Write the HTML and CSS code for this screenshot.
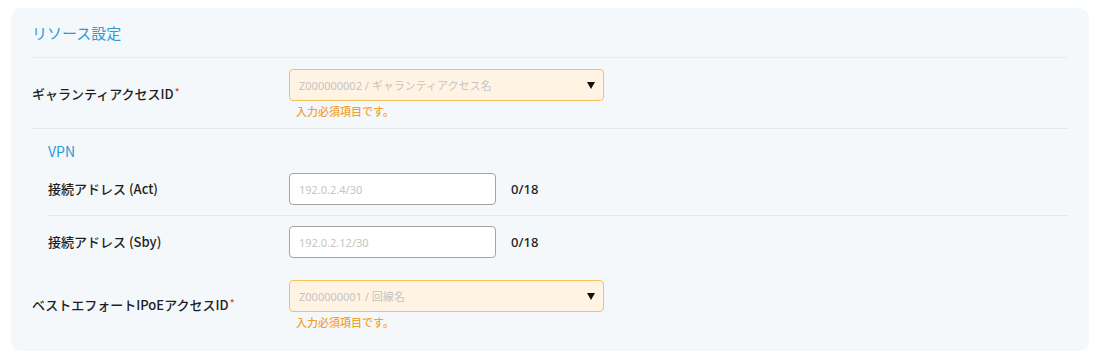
FILE: index.html
```html
<!DOCTYPE html>
<html lang="ja">

<head>
    <meta charset="UTF-8">
    <meta name="viewport" content="width=device-width, initial-scale=1.0">
    <title>リソース設定</title>
    <link rel="stylesheet" href="styles.css">
</head>

<body>
    <div class="card">
        <h2 class="card-title">リソース設定</h2>

        <div class="form-row">
            <label class="form-label">ギャランティアクセスID<span class="req">*</span></label>
            <div class="form-field">
                <div class="select error">
                    <span class="placeholder">Z000000002 / ギャランティアクセス名</span>
                    <span class="caret"></span>
                </div>
                <div class="error-text">入力必須項目です。</div>
            </div>
        </div>

        <div class="sub-section">
            <h3 class="sub-title">VPN</h3>
            <div class="input-row">
                <label class="form-label">接続アドレス (Act)</label>
                <div class="input"><span class="placeholder">192.0.2.4/30</span></div>
                <span class="counter">0/18</span>
            </div>
            <div class="input-row">
                <label class="form-label">接続アドレス (Sby)</label>
                <div class="input"><span class="placeholder">192.0.2.12/30</span></div>
                <span class="counter">0/18</span>
            </div>
        </div>

        <div class="form-row last">
            <label class="form-label">ベストエフォートIPoEアクセスID<span class="req">*</span></label>
            <div class="form-field">
                <div class="select error">
                    <span class="placeholder">Z000000001 / 回線名</span>
                    <span class="caret"></span>
                </div>
                <div class="error-text">入力必須項目です。</div>
            </div>
        </div>
    </div>
</body>

</html>
```

FILE: styles.css
```css
body {
    margin: 0;
    background-color: #ffffff;
    font-family: "Noto Sans CJK JP", "Noto Sans", sans-serif;
    color: #222;
}

.card {
    width: 1078px;
    box-sizing: border-box;
    margin: 8px 0 0 11px;
    padding: 0 21px 12px 20px;
    background-color: #f4f8fb;
    border-radius: 10px;
}

.card-title {
    margin: 0;
    padding: 15px 0 14px 1px;
    font-size: 15px;
    line-height: 20px;
    font-weight: 400;
    color: #2b9bd8;
    border-bottom: 1px solid #e6ecf1;
}

.form-row {
    display: flex;
    align-items: center;
    padding: 11px 0 9px 0;
    border-bottom: 1px solid #e3e8ed;
}

.form-row.last {
    border-bottom: none;
    padding-top: 12px;
}

.form-label {
    width: 258px;
    flex-shrink: 0;
    padding-left: 1px;
    font-size: 13px;
    line-height: 18px;
    font-weight: 500;
    color: #1e1e1e;
    box-sizing: border-box;
}

.req {
    color: #e53935;
    font-size: 10px;
    vertical-align: top;
    position: relative;
    top: -2px;
    margin-left: 1px;
}

.select {
    width: 315px;
    height: 32px;
    box-sizing: border-box;
    display: flex;
    align-items: center;
    justify-content: space-between;
    padding: 0 8px 0 9px;
    border-radius: 4px;
    border: 1px solid #f5c25a;
    background-color: #fff4e3;
}

.placeholder {
    font-family: "Noto Sans", "Noto Sans CJK JP", sans-serif;
    font-size: 11px;
    color: #c4c4c4;
}

.caret {
    width: 0;
    height: 0;
    border-left: 4.5px solid transparent;
    border-right: 4.5px solid transparent;
    border-top: 7px solid #111;
}

.error-text {
    margin-top: 2px;
    padding-left: 7px;
    font-size: 11px;
    line-height: 16px;
    font-weight: 500;
    color: #f2a22a;
}

.sub-section {
    padding-left: 16px;
}

.sub-title {
    margin: 0;
    padding: 13px 0 0 1px;
    margin-bottom: 3px;
    font-size: 14px;
    line-height: 18px;
    font-weight: 400;
    color: #2b9bd8;
}

.input-row {
    display: flex;
    align-items: center;
    padding: 10px 0;
    border-bottom: 1px solid #e3e8ed;
}

.input-row:last-child {
    border-bottom: none;
}

.sub-section .form-label {
    width: 242px;
}

.input {
    width: 207px;
    height: 32px;
    box-sizing: border-box;
    display: flex;
    align-items: center;
    padding: 0 9px;
    border: 1px solid #a4a4a4;
    border-radius: 4px;
    background-color: #ffffff;
}

.counter {
    margin-left: 15px;
    font-family: "Noto Sans", sans-serif;
    font-size: 13px;
    font-weight: 500;
    color: #222;
}
```
